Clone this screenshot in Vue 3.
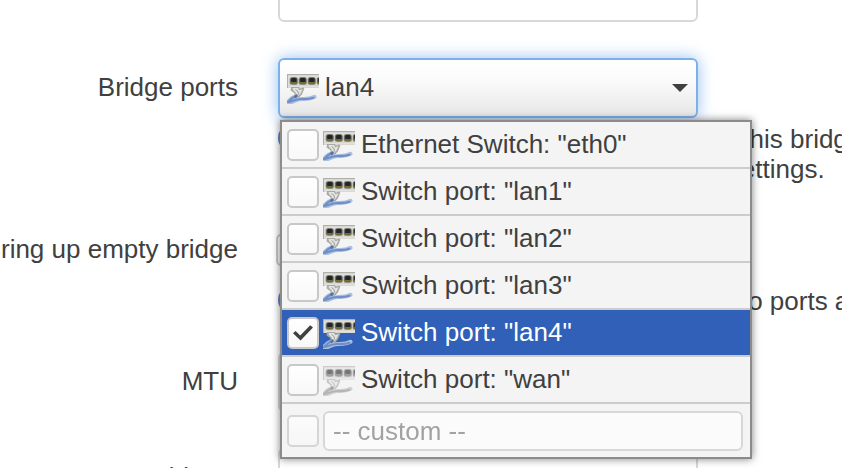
<template>
    <div class="page">
        <svg class="defs" aria-hidden="true">
            <symbol id="switch-icon" viewBox="0 0 32 32">
                <path d="M0 2h32v14H0z" fill="#cfcec8" />
                <path d="M1 3.5h31v10H1z" fill="#dfdfda" />
                <path d="M0 2h32v1H0zM0 2h1v14H0z" fill="#b0b0ab" />
                <path d="M1 14h31v1.5H1z" fill="#e2e2de" />
                <g v-for="x in [3, 12, 21, 30]" :key="x">
                    <rect :x="x - 0.5" y="5" width="8.5" height="8" rx="2.5" fill="#a09f98" />
                    <rect :x="x + 0.3" y="5.6" width="7" height="6.6" rx="2" fill="#55574f" />
                    <rect :x="x + 1.2" y="6" width="5.2" height="4.6" rx="1.5" fill="#20242c" />
                    <rect :x="x + 0.8" y="10" width="6" height="1.8" fill="#77702c" />
                </g>
                <path d="M4 15h8l.8 1.5 3.7-1 .8 1.2-2.3 5.5-3.3 3.8-3.6-.6-.8-4.3L3.6 18.5z" fill="#a9a9a6" />
                <path d="M5.5 16h5.6l1 2.2 3.4-.9-2 4.2-2.8 3-1.9-.6-.1-3.5-2.5-2.1z" fill="#e4e4e1" />
                <path d="M8.5 17.5l2.5 2 .5 2.4-1.6 2" fill="none" stroke="#989a9b" stroke-width="1" />
                <path d="M8.5 24.5C5.8 25 3 27.5 1 30c3.5 1.8 7-3.1 14-3 5 .2 8.8-.2 12.5-2.2" fill="none" stroke="#adbfdf" stroke-width="4" stroke-linecap="round" />
                <path d="M8.3 24.5C5.5 25.4 3 27.8 1 30c3.8 0 7-3.2 13.6-3 5 .2 8.5 0 11.8-1.2" fill="none" stroke="#6e8fc8" stroke-width="2.2" stroke-linecap="round" />
                <path d="M7 24.2l2.2-2.2 1.8 2-2.3 2.4z" fill="#54719f" />
            </symbol>
        </svg>

        <form class="form" @submit.prevent>
            <div class="row">
                <label class="title" for="name">Device name</label>
                <div class="field">
                    <input id="name" class="text" type="text" value="br-lan" disabled>
                </div>
            </div>

            <div class="row">
                <span id="ports-title" class="title">Bridge ports</span>
                <div class="field">
                    <div class="dropdown">
                        <button type="button" class="toggle" aria-labelledby="ports-title ports-value" :aria-expanded="open" @click="open = !open">
                            <svg class="icon" aria-hidden="true"><use href="#switch-icon" /></svg>
                            <span id="ports-value" class="value">{{ selected.join(' ') }}</span>
                            <svg class="caret" viewBox="0 0 16 8" aria-hidden="true"><path d="M0 0h16L8 8z" /></svg>
                        </button>

                        <ul v-show="open" class="menu">
                            <li v-for="port in ports" :key="port.name" :class="{ selected: selected.includes(port.name) }">
                                <label class="option">
                                    <input v-model="selected" class="check" type="checkbox" :value="port.name">
                                    <svg class="icon" :class="{ down: port.down }" aria-hidden="true"><use href="#switch-icon" /></svg>
                                    <span class="caption">{{ port.type }}: "{{ port.name }}"</span>
                                </label>
                            </li>
                            <li class="custom">
                                <input class="check" type="checkbox" aria-label="Use custom port" disabled>
                                <input v-model="custom" class="custom-text" type="text" placeholder="-- custom --" aria-label="Custom port">
                            </li>
                        </ul>
                    </div>
                    <div class="hint">
                        <span class="help"></span>
                        <p>
                            Specifies the wired ports to attach to this bridge. In order to attach wireless networks, choose the associated<br>
                            interface as network in the wireless settings.
                        </p>
                    </div>
                </div>
            </div>

            <div class="row">
                <label class="title" for="empty">Bring up empty bridge</label>
                <div class="field">
                    <div class="tick">
                        <input id="empty" class="check" type="checkbox">
                    </div>
                    <div class="hint">
                        <span class="help"></span>
                        <p>Bring up the bridge interface even if no ports are attached</p>
                    </div>
                </div>
            </div>

            <div class="row">
                <label class="title" for="mtu">MTU</label>
                <div class="field">
                    <input id="mtu" class="text" type="text">
                </div>
            </div>

            <div class="row">
                <label class="title" for="mac">MAC address</label>
                <div class="field">
                    <input id="mac" class="text" type="text">
                </div>
            </div>
        </form>
    </div>
</template>

<script setup>
import { ref } from 'vue';

const open = ref(true);
const custom = ref('');
const selected = ref(['lan4']);

const ports = [
    { type: 'Ethernet Switch', name: 'eth0' },
    { type: 'Switch port', name: 'lan1' },
    { type: 'Switch port', name: 'lan2' },
    { type: 'Switch port', name: 'lan3' },
    { type: 'Switch port', name: 'lan4' },
    { type: 'Switch port', name: 'wan', down: true },
];
</script>

<style>
body {
    background: #fff;
}
</style>

<style scoped>
* {
    box-sizing: border-box;
}

.page {
    height: 100vh;
    overflow: hidden;
    color: #404040;
    font-family: "Liberation Sans", Helvetica, Arial, sans-serif;
    font-size: 26px;
    line-height: 30px;
}

.defs {
    position: absolute;
    width: 0;
    height: 0;
}

/* the form is scrolled part of the way down */
.form {
    display: flex;
    flex-direction: column;
    gap: 36px;
    margin-top: -38px;
}

.row {
    display: grid;
    grid-template-columns: 238px minmax(0, 1fr);
    column-gap: 40px;
}

.title {
    display: flex;
    align-items: center;
    justify-content: flex-end;
    height: 58px;
    white-space: nowrap;
}

input,
button {
    margin: 0;
    color: inherit;
    font: inherit;
}

.text {
    display: block;
    width: 100%;
    max-width: 420px;
    height: 60px;
    padding: 0 8px 4px;
    border: 2px solid #d8d8d8;
    border-radius: 6px;
    background: #fff;
}

.text:disabled {
    color: #c8c8c8;
}

.dropdown {
    position: relative;
    max-width: 420px;
}

.toggle {
    display: flex;
    align-items: center;
    gap: 6px;
    width: 100%;
    height: 60px;
    padding: 0 8px 0 7px;
    border: 2px solid #7db0ea;
    border-radius: 6px;
    background: linear-gradient(#fff, #fafafa 40%, #e6e6e6);
    box-shadow: 0 0 16px rgba(82, 150, 236, 0.6);
    text-align: left;
}

.value {
    flex: 1;
    padding-bottom: 2px;
}

.icon {
    flex: none;
    width: 32px;
    height: 32px;
}

.icon.down {
    filter: grayscale(1);
    opacity: 0.6;
}

.caret {
    width: 16px;
    height: 8px;
    fill: #404040;
}

.menu {
    position: absolute;
    z-index: 1;
    top: 62px;
    left: 2px;
    width: 472px;
    margin: 0;
    padding: 0;
    border: 2px solid #8c8b8a;
    background: #f4f4f4;
    box-shadow: 0 0 8px rgba(0, 0, 0, 0.5);
    list-style: none;
}

.menu li {
    border-bottom: 2px solid #ccc;
}

.menu li:last-child {
    border-bottom: 0;
}

.option,
.custom {
    display: flex;
    align-items: center;
    gap: 4px;
    height: 45px;
    padding: 0 7px 0 5px;
}

.custom {
    height: 53px;
}

.caption {
    padding: 0 0 2px 2px;
    white-space: nowrap;
}

.selected {
    background: #3060b8;
    background-clip: padding-box;
    color: #fff;
}

.check {
    display: grid;
    flex: none;
    place-content: center;
    width: 32px;
    height: 32px;
    border: 2px solid #c8c8c8;
    border-radius: 5px;
    background: linear-gradient(#fff, #f8f8f8);
    appearance: none;
}

.check:checked::before {
    width: 20px;
    height: 16px;
    background: #404040;
    clip-path: polygon(0 54%, 13% 40%, 36% 68%, 86% 4%, 100% 18%, 38% 100%);
    content: "";
}

.check:disabled,
.custom-text {
    opacity: 0.7;
}

.custom-text {
    flex: 1;
    min-width: 0;
    height: 40px;
    padding: 2px 8px 0;
    border: 2px solid #ccc;
    border-radius: 6px;
    background: #fff;
}

.custom-text::placeholder {
    color: #808080;
    opacity: 1;
}

.tick {
    display: flex;
    align-items: center;
    height: 60px;
    margin-left: -2px;
}

.hint {
    display: flex;
    gap: 8px;
    margin-top: 6px;
}

.hint p {
    margin: 0;
    padding-left: 2px;
    white-space: nowrap;
}

.help {
    flex: none;
    width: 28px;
    height: 28px;
    border-radius: 50%;
    background: #5c8ad0;
}
</style>
